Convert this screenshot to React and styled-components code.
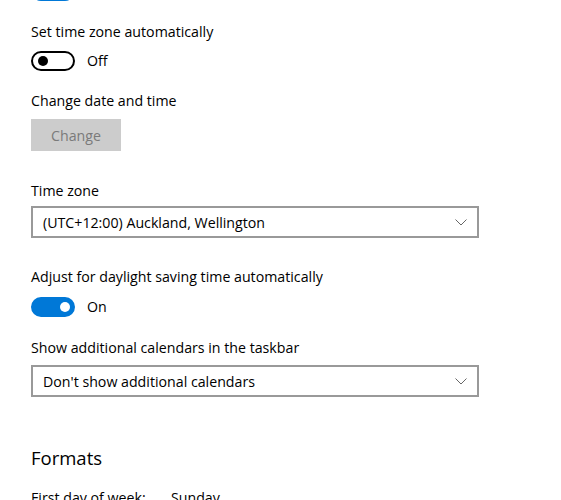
import React from "react";
import styled, { createGlobalStyle } from "styled-components";

const Global = createGlobalStyle`
  html, body { margin: 0; padding: 0; background: #fff; }
  body { font-family: "Open Sans", "Noto Sans", sans-serif; color: #000; overflow: hidden; }
`;

const Page = styled.div`
  width: 561px;
  height: 500px;
  overflow: hidden;
  padding: 0 31px;
  box-sizing: border-box;
  display: flex;
  flex-direction: column;
  & > * { flex-shrink: 0; }
`;

const Label = styled.div`
  font-size: 14.2px;
  line-height: 20px;
  margin-top: ${(p) => p.$mt}px;
  margin-bottom: ${(p) => p.$mb}px;
`;

const ToggleRow = styled.div`
  display: flex;
  align-items: center;
  gap: 12px;
  height: 20px;
`;

const Track = styled.span`
  position: relative;
  width: 44px;
  height: 20px;
  box-sizing: border-box;
  border-radius: 10px;
  border: 2px solid ${(p) => (p.$on ? "#0078d7" : "#000")};
  background: ${(p) => (p.$on ? "#0078d7" : "#fff")};
  flex: none;
  margin-top: ${(p) => p.$mt || 0}px;
`;

const Knob = styled.span`
  position: absolute;
  top: 3px;
  left: ${(p) => (p.$on ? "27px" : "5px")};
  width: 10px;
  height: 10px;
  border-radius: 50%;
  background: ${(p) => (p.$on ? "#fff" : "#000")};
`;

const State = styled.span`
  font-size: 14.2px;
  line-height: 20px;
`;

const Button = styled.div`
  width: 90px;
  height: 32px;
  background: #cccccc;
  color: #7a7a7a;
  font-size: 14.2px;
  display: flex;
  align-items: center;
  justify-content: center;
`;

const Select = styled.div`
  width: 448px;
  height: 32px;
  box-sizing: border-box;
  border: 2px solid #999999;
  display: flex;
  align-items: center;
  justify-content: space-between;
  padding: 0 10px;
  font-size: 14.2px;
`;

const Heading = styled.div`
  font-size: 18.5px;
  line-height: 28px;
  margin-top: ${(p) => p.$mt}px;
`;

const InfoRow = styled.div`
  display: flex;
  font-size: 14.2px;
  line-height: 20px;
  margin-top: ${(p) => p.$mt}px;
`;

const InfoKey = styled.span`
  width: 140px;
`;

const Toggle = ({ on }) => (
  <ToggleRow>
    <Track $on={on}>
      <Knob $on={on} />
    </Track>
    <State>{on ? "On" : "Off"}</State>
  </ToggleRow>
);

const Chevron = () => (
  <svg width="12" height="7" viewBox="0 0 12 7" fill="none">
    <path d="M0.5 0.5 L6 6 L11.5 0.5" stroke="#666" strokeWidth="1" />
  </svg>
);

export default function App() {
  return (
    <>
      <Global />
      <Page>
        <Track $on $mt={-19}>
          <Knob $on />
        </Track>
        <Label $mt={21} $mb={9}>Set time zone automatically</Label>
        <Toggle on={false} />
        <Label $mt={20} $mb={8}>Change date and time</Label>
        <Button>Change</Button>
        <Label $mt={30} $mb={5}>Time zone</Label>
        <Select>
          <span>(UTC+12:00) Auckland, Wellington</span>
          <Chevron />
        </Select>
        <Label $mt={29} $mb={10}>Adjust for daylight saving time automatically</Label>
        <Toggle on />
        <Label $mt={21} $mb={7}>Show additional calendars in the taskbar</Label>
        <Select>
          <span>Don't show additional calendars</span>
          <Chevron />
        </Select>
        <Heading $mt={47}>Formats</Heading>
        <InfoRow $mt={16}>
          <InfoKey>First day of week:</InfoKey>
          <span>Sunday</span>
        </InfoRow>
      </Page>
    </>
  );
}
